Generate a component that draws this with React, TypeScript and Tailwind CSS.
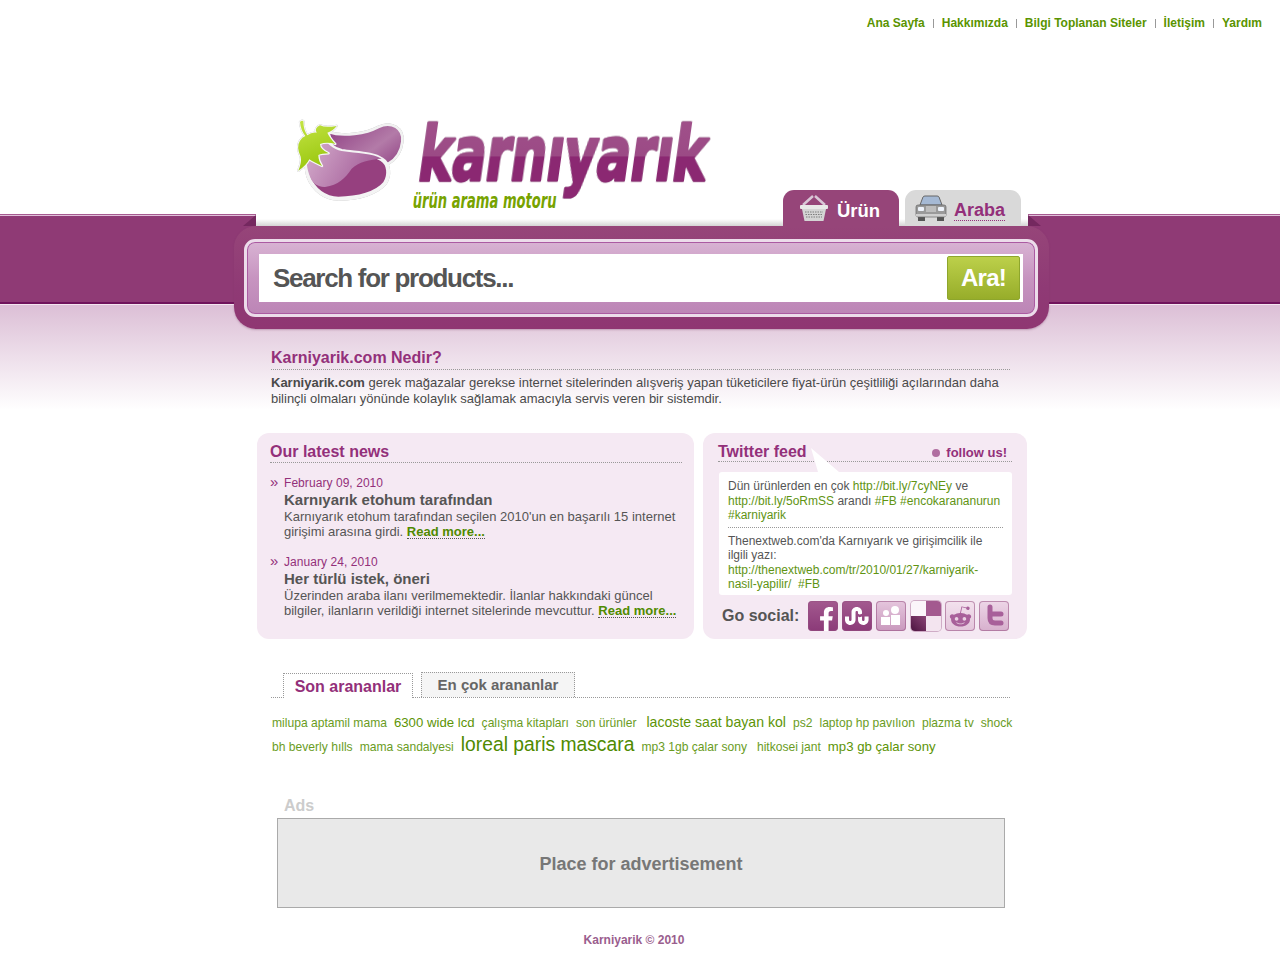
import React from "react";
import { FaFacebookF, FaRedditAlien, FaStumbleupon } from "react-icons/fa";

const F = "font-['Liberation_Sans',Arial,sans-serif]";

function Sep() {
  return <span className="w-px h-[9px] bg-[#999] mx-[8px]" />;
}

function Logo() {
  return (
    <svg viewBox="0 0 1380 378" className="w-[460px] h-[126px] shrink-0 ml-[14px]">
      <defs>
        <linearGradient id="ltxt" gradientUnits="userSpaceOnUse" x1="0" y1="60" x2="0" y2="280">
          <stop offset="0" stopColor="#a0508a" />
          <stop offset="0.5" stopColor="#9b4a85" />
          <stop offset="0.5" stopColor="#8b2872" />
          <stop offset="1" stopColor="#8b2872" />
        </linearGradient>
        <linearGradient id="lback" x1="0" y1="0" x2="1" y2="0.7">
          <stop offset="0" stopColor="#8e3d82" />
          <stop offset="0.7" stopColor="#b37ba8" />
          <stop offset="1" stopColor="#9c5590" />
        </linearGradient>
        <linearGradient id="lhi" x1="0" y1="0" x2="1" y2="0.4">
          <stop offset="0" stopColor="#d8b2d0" />
          <stop offset="1" stopColor="#a5609a" />
        </linearGradient>
        <linearGradient id="lleaf" x1="0" y1="0" x2="0.3" y2="1">
          <stop offset="0" stopColor="#c4e445" />
          <stop offset="1" stopColor="#9ac70f" />
        </linearGradient>
      </defs>
      <g className="[filter:drop-shadow(0_0_2px_#b5b5b5)]">
        <path d="M175 96 C220 112 290 100 325 81 C365 62 402 85 397 125 C393 160 375 180 355 191 L200 190 Z" fill="url(#lback)" stroke="#f1f1f1" strokeWidth="8" />
        <path d="M150 105 C170 130 190 148 215 153 C260 160 310 160 335 178 C358 192 360 225 345 250 C320 280 265 296 205 296 C165 295 130 270 115 230 C108 205 108 190 112 175 Z" fill="#96407f" stroke="#f4f4f4" strokeWidth="12" strokeLinejoin="round" />
        <path d="M150 105 C170 130 190 148 215 153 C260 160 310 160 335 176 C300 178 265 186 245 206 C225 235 205 255 165 261 C145 262 130 250 125 241 C112 215 108 190 112 175 Z" fill="url(#lhi)" />
        <path d="M90 66 Q96 60 100 64 Q100 90 112 106 Q125 96 140 98 Q132 85 150 76 Q165 84 200 78 Q190 92 172 98 Q178 112 196 132 Q170 124 150 132 Q150 148 176 160 Q155 160 145 165 Q145 182 156 198 Q130 186 118 178 Q108 198 85 212 Q96 185 92 170 Q78 140 90 122 Q96 112 106 108 Q92 90 90 66 Z" fill="url(#lleaf)" stroke="#f6f6f6" strokeWidth="7" strokeLinejoin="round" paintOrder="stroke" />
      </g>
      <text
        x="450"
        y="240"
        fontFamily="'DejaVu Sans',sans-serif"
        fontWeight="700"
        fontSize="225"
        textLength="862"
        lengthAdjust="spacingAndGlyphs"
        fill="url(#ltxt)"
        stroke="url(#ltxt)"
        strokeWidth="9"
        strokeLinejoin="round"
        transform="skewX(-8) translate(22 0)"
        className="[filter:drop-shadow(0_0_2px_#bdbdbd)_drop-shadow(0_0_2px_#d5d5d5)]"
      >
        karnıyarık
      </text>
      <text
        x="428"
        y="324"
        fontFamily="'DejaVu Sans',sans-serif"
        fontWeight="700"
        fontStyle="italic"
        fontSize="62"
        textLength="432"
        lengthAdjust="spacingAndGlyphs"
        fill="#77a300"
      >
        ürün arama motoru
      </text>
    </svg>
  );
}

function Basket() {
  return (
    <svg viewBox="0 0 30 28" className="w-[30px] h-[28px]">
      <path d="M4 11 L14 2 M26 11 L16 2" stroke="#d9c6d6" strokeWidth="2.5" fill="none" />
      <rect x="1" y="11" width="28" height="4" rx="1" fill="#e8e8e8" />
      <path d="M3 15 H27 L24.5 27 H5.5 Z" fill="#d4d4d4" />
      <path d="M6 18 H24 M6.5 20.5 H23.5 M7 23 H23" stroke="#7d7d7d" strokeWidth="1.2" strokeDasharray="1.5 1" />
    </svg>
  );
}

function Car() {
  return (
    <svg viewBox="0 0 32 26" className="w-[32px] h-[26px]">
      <rect x="3" y="20" width="7" height="6" fill="#555" />
      <rect x="22" y="20" width="7" height="6" fill="#555" />
      <path d="M5 10 L8 2 Q8.5 1 10 1 H22 Q23.5 1 24 2 L27 10 Z" fill="#a5b9d4" stroke="#666" />
      <rect x="1" y="10" width="30" height="12" rx="2" fill="#9a9a9a" stroke="#666" strokeWidth=".7" />
      <rect x="3" y="12" width="6" height="4" rx="1" fill="#eef3fb" />
      <rect x="23" y="12" width="6" height="4" rx="1" fill="#eef3fb" />
      <path d="M11 12 H21 M11 14 H21 M11 16 H21" stroke="#e0e0e0" />
      <rect x="1" y="19" width="30" height="2.5" fill="#cfcfcf" />
    </svg>
  );
}

function Social({ children, cls }: { children?: React.ReactNode; cls: string }) {
  return (
    <span className={`w-[30px] h-[30px] rounded-[4px] overflow-hidden flex items-center justify-center shadow-[inset_0_0_0_1px_rgba(150,80,130,0.55)] ${cls}`}>
      {children}
    </span>
  );
}

function NewsItem({ date, title, body, mt }: { date: string; title: string; body: React.ReactNode; mt: string }) {
  return (
    <div className={`flex ${mt}`}>
      <span className="w-[14px] shrink-0 text-[15px] leading-[14px] text-[#93307a] mt-[-1px]">»</span>
      <div>
        <div className="text-[12px] leading-[15px] text-[#93307a] tracking-[0.005em]">{date}</div>
        <div className="text-[15px] leading-[18px] font-bold text-[#555]">{title}</div>
        <div className="text-[13px] leading-[15px] text-[#555]">{body}</div>
      </div>
    </div>
  );
}

function More() {
  return <span className="font-bold text-[#4f8a00] border-b border-dotted border-[#555] leading-[13px] inline-block">Read more...</span>;
}

function G({ children }: { children: React.ReactNode }) {
  return <span className="text-[#5f9413]">{children}</span>;
}

export default function App() {
  return (
    <div className={`${F} w-[1280px] h-[960px] overflow-hidden flex flex-col bg-[linear-gradient(to_bottom,#fff_214px,#a65a90_214px,#a65a90_215px,#e0bfd8_215px,#e0bfd8_216px,#8f3a75_216px,#8f3a75_302px,#70135c_302px,#70135c_304px,#f3e6ef_304px,#f3e6ef_305px,#dcbfd6_305px,#fff_410px)]`}>
      <nav className="h-[46px] pt-[16px] pr-[18px] flex justify-end items-start text-[12px] leading-[14px] font-bold text-[#5a9400]">
        <a className="flex items-center">Ana Sayfa<Sep /></a>
        <a className="flex items-center">Hakkımızda<Sep /></a>
        <a className="flex items-center">Bilgi Toplanan Siteler<Sep /></a>
        <a className="flex items-center">İletişim<Sep /></a>
        <a>Yardım</a>
      </nav>

      <header className="relative ml-[256px] w-[772px] h-[180px] flex items-end bg-[linear-gradient(to_bottom,#fff_calc(100%-7px),#d4d4d4)]">
        <span className="absolute left-[-13px] bottom-0 w-0 h-0 border-l-[13px] border-l-transparent border-b-[11px] border-b-[#74285f]" />
        <span className="absolute right-[-13px] bottom-0 w-0 h-0 border-r-[13px] border-r-transparent border-b-[11px] border-b-[#74285f]" />
        <Logo />
        <div className="ml-[53px] w-[116px] h-[36px] rounded-t-[11px] bg-[#964579] flex items-center pl-[16px]">
          <Basket />
          <span className="ml-[8px] mt-[5px] text-[18.5px] font-bold text-white">Ürün</span>
        </div>
        <div className="ml-[6px] w-[116px] h-[36px] rounded-t-[11px] bg-[#d9d9d9] flex items-center pl-[10px]">
          <Car />
          <span className="ml-[7px] mt-[5px] text-[18px] leading-[20px] font-bold text-[#93307a] border-b border-dotted border-[#93307a]">Araba</span>
        </div>
      </header>

      <section className="ml-[234px] w-[815px] h-[103px] rounded-[22px] bg-[linear-gradient(to_bottom,#964579,#8f3a75_60%,#8f3672)] pt-[13px] pl-[10px] pr-[11px] shadow-[0_1px_2px_rgba(120,60,100,0.35)]">
        <div className="h-[78px] rounded-[11px] border-[3px] border-[#ecdcea] bg-[linear-gradient(to_bottom,#d8b3d3,#c794c0_50%,#bc85b6)] pt-[12px] px-[12px] shadow-[inset_0_0_0_1px_#ab5aa2]">
          <div className="h-[48px] bg-white flex items-center justify-between pr-[3px] pl-[14px]">
            <span className="text-[26px] font-bold text-[#555] tracking-[-0.05em]">Search for products...</span>
            <button className="w-[73px] h-[44px] rounded-[2px] border border-[#8ea62c] bg-[linear-gradient(to_bottom,#bcd04a,#97ad2a)] text-[24px] font-bold text-white tracking-[-0.03em]">Ara!</button>
          </div>
        </div>
      </section>

      <section className="ml-[271px] w-[739px] mt-[19px]">
        <h2 className="text-[16px] leading-[19px] font-bold text-[#93307a] pb-[2px] border-b border-dotted border-[#999]">Karniyarik.com Nedir?</h2>
        <p className="text-[13px] leading-[16px] text-[#4a4a4a] mt-[5px]">
          <b>Karniyarik.com</b> gerek mağazalar gerekse internet sitelerinden alışveriş yapan tüketicilere fiyat-ürün çeşitliliği açılarından daha bilinçli olmaları yönünde kolaylık sağlamak amacıyla servis veren bir sistemdir.
        </p>
      </section>

      <div className="ml-[257px] w-[770px] h-[206px] mt-[26px] flex gap-[9px]">
        <section className="w-[437px] rounded-[12px] bg-[#f5e9f3] pl-[13px] pr-[12px] pt-[9px]">
          <h2 className="text-[16px] leading-[20px] font-bold text-[#93307a] border-b border-dotted border-[#999]">Our latest news</h2>
          <NewsItem
            mt="mt-[13px]"
            date="February 09, 2010"
            title="Karnıyarık etohum tarafından"
            body={<>Karnıyarık etohum tarafından seçilen 2010'un en başarılı 15 internet girişimi arasına girdi. <More /></>}
          />
          <NewsItem
            mt="mt-[16px]"
            date="January 24, 2010"
            title="Her türlü istek, öneri"
            body={<>Üzerinden araba ilanı verilmemektedir. İlanlar hakkındaki güncel bilgiler, ilanların verildiği internet sitelerinde mevcuttur. <More /></>}
          />
        </section>

        <section className="relative w-[324px] rounded-[12px] bg-[#f5e9f3] px-[15px] pt-[9px]">
          <div className="flex justify-between items-center border-b border-dotted border-[#999] h-[20px]">
            <h2 className="text-[16px] font-bold text-[#93307a]">Twitter feed</h2>
            <span className="flex items-center text-[13px] font-bold text-[#93307a] mr-[5px] mt-[2px]">
              <span className="w-[8px] h-[8px] rounded-full bg-[#b06ea0] mr-[6px]" />follow us!
            </span>
          </div>
          <svg viewBox="0 0 28 24" className="absolute left-[108px] top-[15px] w-[28px] h-[24px]"><path d="M0 0 L28 24 H7 Z" fill="#fff" /></svg>
          <div className="mt-[10px] ml-[1px] w-[293px] h-[123px] rounded-[3px] bg-white pt-[7px] px-[9px] text-[12px] leading-[14.5px] text-[#555]">
            <p className="pb-[4px] border-b border-dotted border-[#999]">
              Dün ürünlerden en çok <G>http://bit.ly/7cyNEy</G> ve <G>http://bit.ly/5oRmSS</G> arandı <G>#FB</G> <G>#encokarananurun</G> <G>#karniyarik</G>
            </p>
            <p className="pt-[6px]">
              Thenextweb.com'da Karnıyarık ve girişimcilik ile ilgili yazı: <G>http://thenextweb.com/tr/2010/01/27/karniyarik-nasil-yapilir/</G> <G>&nbsp;#FB</G>
            </p>
          </div>
          <div className="flex items-center mt-[6px]">
            <span className="ml-[4px] text-[16px] font-bold text-[#555] w-[87px]">Go social:</span>
            <div className="flex gap-[4px] ml-[-1px]">
              <Social cls="bg-[linear-gradient(to_bottom,#a3598f,#8b3a78)]"><FaFacebookF className="text-white text-[24px] mt-[5px] ml-[7px]" /></Social>
              <Social cls="bg-[linear-gradient(to_bottom,#a3598f,#8b3a78)]"><FaStumbleupon className="text-white text-[24px]" /></Social>
              <Social cls="bg-[linear-gradient(to_bottom,#e5c6dd,#c999bd)]">
                <svg viewBox="0 0 24 24" className="w-[24px] h-[24px]" fill="#fff">
                  <circle cx="7" cy="9" r="3" /><circle cx="16" cy="6" r="4" />
                  <path d="M2 13 H11 V21 H2 Z M12 11 H21 V21 H12 Z" />
                </svg>
              </Social>
              <span className="w-[30px] h-[30px] rounded-[4px] overflow-hidden grid grid-cols-2 grid-rows-2 ml-[1px] shadow-[0_0_0_1px_rgba(150,80,130,0.4)]">
                <span className="bg-[#fbf5fa]" /><span className="bg-[#a3598f]" />
                <span className="bg-[linear-gradient(45deg,#4d1440,#8a4476)]" /><span className="bg-[#f3e4ef]" />
              </span>
              <Social cls="bg-[linear-gradient(to_bottom,#f3e2ee,#e3c5db)]"><FaRedditAlien className="text-[#a8609a] text-[23px]" /></Social>
              <Social cls="bg-[linear-gradient(to_bottom,#edd6e7,#d7b0cd)]">
                <svg viewBox="0 0 24 24" className="w-[24px] h-[24px]" fill="none" stroke="#a8609a" strokeWidth="5" strokeLinecap="round" strokeLinejoin="round">
                  <path d="M8 3 V14 Q8 19 13 19 H19 M8 10 H19" />
                </svg>
              </Social>
            </div>
          </div>
        </section>
      </div>

      <section className="ml-[271px] w-[739px] mt-[34px]">
        <div className="flex items-end h-[25px] border-b border-dotted border-[#999] pl-[12px]">
          <div className="w-[130px] h-[25px] mb-[-1px] border-t border-x border-dotted border-[#999] bg-white text-center text-[16px] leading-[26px] font-bold text-[#93307a]">Son arananlar</div>
          <div className="w-[154px] h-[25px] ml-[8px] border-t border-x border-dotted border-[#999] bg-[#f5f5f5] text-center text-[15px] leading-[24px] font-bold text-[#666]">En çok arananlar</div>
        </div>
        <div className="mt-[14px] pl-[1px] flex items-baseline h-[20px] text-[#6a9c1e] text-[12.1px] whitespace-nowrap">
          <span className="mr-[7px]">milupa aptamil mama</span>
          <span className="mr-[7px] text-[13.2px] text-[#5d9406]">6300 wide lcd</span>
          <span className="mr-[7px]">çalışma kitapları</span>
          <span className="mr-[10px]">son ürünler</span>
          <span className="mr-[7px] text-[14.1px] text-[#5d9406]">lacoste saat bayan kol</span>
          <span className="mr-[7px]">ps2</span>
          <span className="mr-[7px]">laptop hp pavılıon</span>
          <span className="mr-[7px]">plazma tv</span>
          <span>shock</span>
        </div>
        <div className="mt-[-1px] pl-[1px] flex items-baseline h-[23px] text-[#6a9c1e] text-[12.1px] whitespace-nowrap">
          <span className="mr-[7px]">bh beverly hılls</span>
          <span className="mr-[7px]">mama sandalyesi</span>
          <span className="mr-[7px] text-[19.3px] text-[#4f8a00]">loreal paris mascara</span>
          <span className="mr-[10px]">mp3 1gb çalar sony</span>
          <span className="mr-[7px]">hitkosei jant</span>
          <span className="text-[13.2px] text-[#5d9406]">mp3 gb çalar sony</span>
        </div>
      </section>

      <section className="ml-[277px] w-[728px] mt-[42px]">
        <div className="pl-[7px] text-[16px] leading-[19px] mb-[3px] font-bold text-[#ccc]">Ads</div>
        <div className="h-[90px] border border-[#aaa] bg-[#e9e9e9] pt-[2px] flex items-center justify-center text-[18px] font-bold text-[#777]">Place for advertisement</div>
      </section>

      <footer className="mt-[25px] ml-[234px] w-[800px] text-center text-[12px] leading-[14px] font-bold text-[#9a5e8e]">Karniyarik © 2010</footer>
    </div>
  );
}
